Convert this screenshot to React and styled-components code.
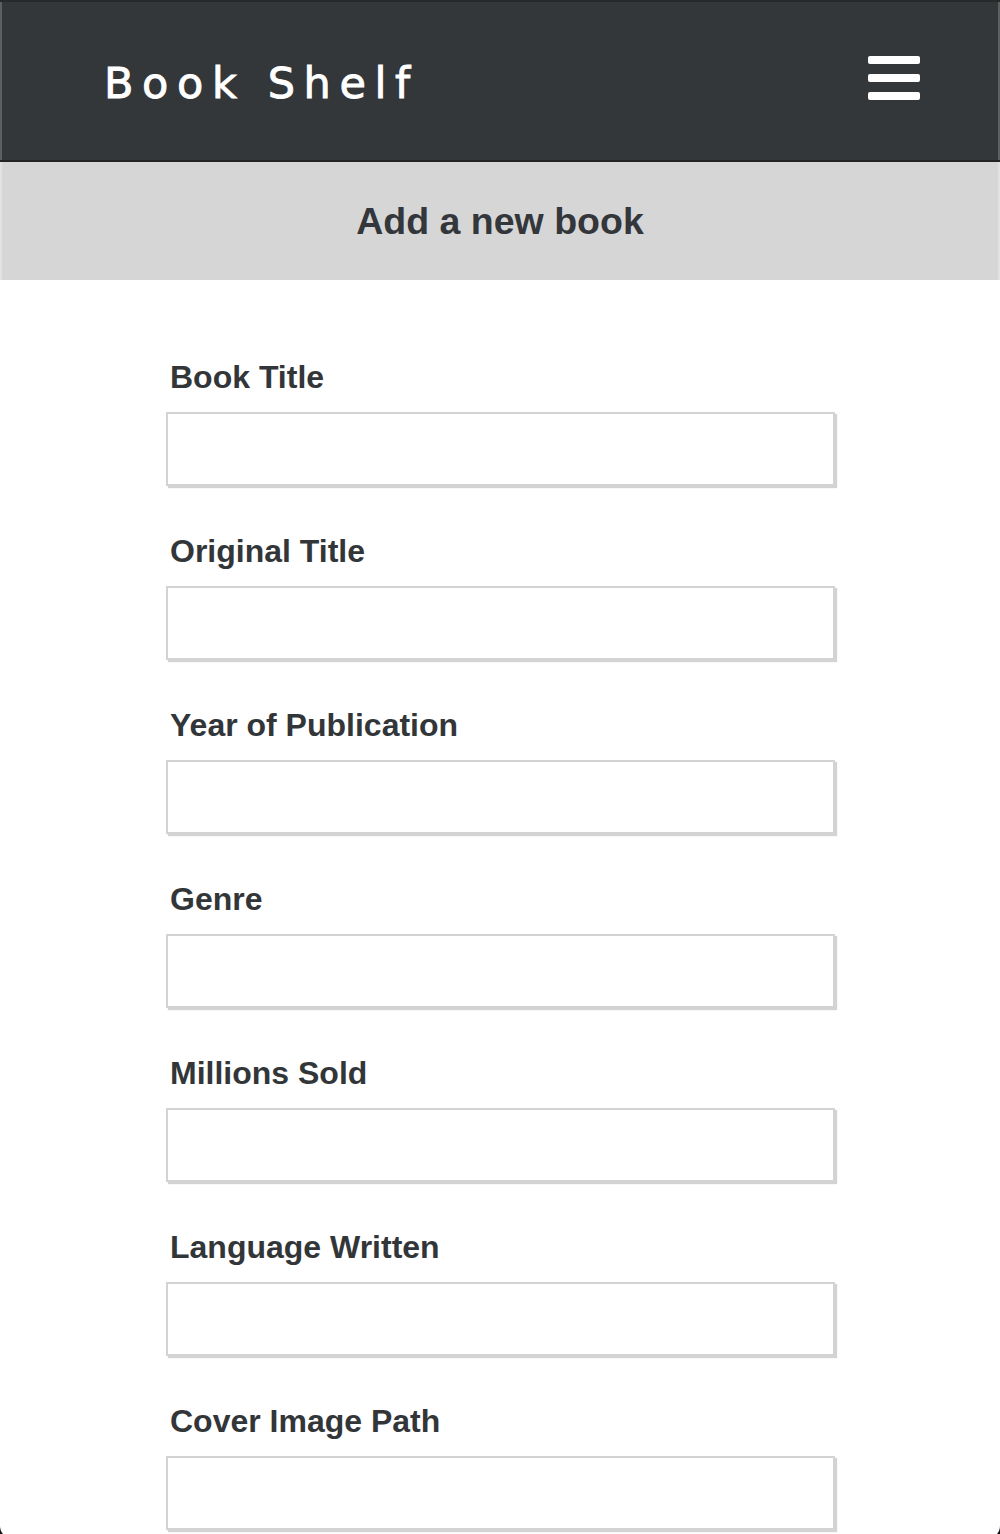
import React from "react";
import styled, { createGlobalStyle } from "styled-components";

const GlobalStyle = createGlobalStyle`
  html, body {
    margin: 0;
    padding: 0;
    background: #111213;
  }
  * {
    box-sizing: border-box;
  }
`;

const Frame = styled.div`
  min-height: 1534px;
  background: #ffffff;
  border-radius: 0 0 12px 12px;
  overflow: hidden;
  font-family: "Liberation Sans", Arial, sans-serif;
  color: #333639;
`;

const Header = styled.header`
  height: 162px;
  background: #343739;
  border-top: 2px solid #27292b;
  border-bottom: 2px solid #222426;
  box-shadow: inset 2px 0 0 rgba(255, 255, 255, 0.2), inset -2px 0 0 rgba(255, 255, 255, 0.2);
  display: flex;
  align-items: center;
  justify-content: space-between;
  padding: 0 80px 0 104px;
`;

const Logo = styled.h1`
  margin: 4px 0 0;
  font-family: "DejaVu Sans", "Lato", sans-serif;
  font-weight: 400;
  font-size: 43px;
  letter-spacing: 8.6px;
  color: #ffffff;
  line-height: 1;
  -webkit-text-stroke: 0.9px #ffffff;
`;

const Burger = styled.button`
  display: flex;
  flex-direction: column;
  gap: 10px;
  width: 52px;
  padding: 0;
  margin-top: -6px;
  background: none;
  border: none;
  cursor: pointer;
`;

const Bar = styled.span`
  display: block;
  height: 8px;
  border-radius: 2px;
  background: #ffffff;
`;

const SubHeader = styled.div`
  height: 118px;
  background: #d6d6d6;
  box-shadow: inset 2px 0 0 rgba(255, 255, 255, 0.3), inset -2px 0 0 rgba(255, 255, 255, 0.3);
  display: flex;
  align-items: center;
  justify-content: center;
`;

const SubTitle = styled.h2`
  margin: 0;
  font-size: 37.5px;
  font-weight: 700;
  color: #33363a;
`;

const Form = styled.form`
  display: flex;
  flex-direction: column;
  gap: 48px;
  padding: 80px 0 8px 166px;
`;

const Field = styled.div`
  display: flex;
  flex-direction: column;
  gap: 18px;
`;

const Label = styled.label`
  font-size: 32px;
  font-weight: 700;
  line-height: 34px;
  padding-left: 4px;
  color: #333639;
`;

const Input = styled.input`
  width: 669px;
  height: 74px;
  border: 2px solid #d3d3d3;
  box-shadow: 2px 2px 1px #d3d3d3;
  background: #ffffff;
  font-size: 24px;
  padding: 0 14px;
  outline: none;
`;

const fields = [
  "Book Title",
  "Original Title",
  "Year of Publication",
  "Genre",
  "Millions Sold",
  "Language Written",
  "Cover Image Path",
];

export default function App() {
  return (
    <>
      <GlobalStyle />
      <Frame>
        <Header>
          <Logo>Book Shelf</Logo>
          <Burger aria-label="Menu">
            <Bar />
            <Bar />
            <Bar />
          </Burger>
        </Header>
        <SubHeader>
          <SubTitle>Add a new book</SubTitle>
        </SubHeader>
        <Form>
          {fields.map((name) => (
            <Field key={name}>
              <Label>{name}</Label>
              <Input type="text" />
            </Field>
          ))}
        </Form>
      </Frame>
    </>
  );
}
